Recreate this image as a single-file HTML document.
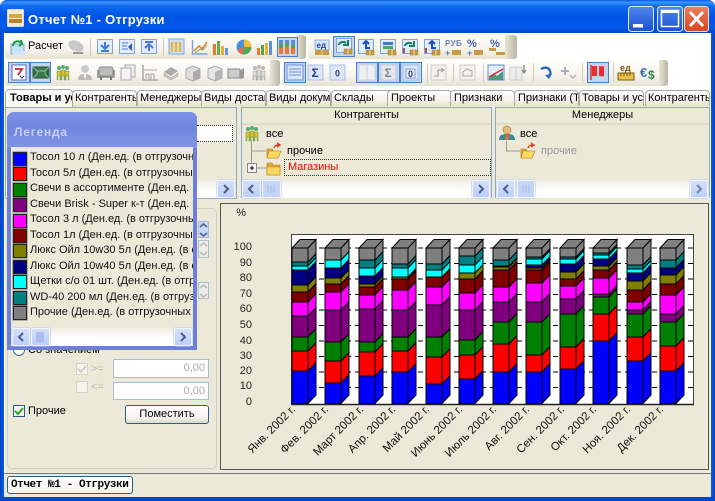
<!DOCTYPE html>
<html><head><meta charset="utf-8"><title>Отчет №1 - Отгрузки</title>
<style>
html,body{margin:0;padding:0;width:715px;height:501px;overflow:hidden;background:#fff}
body{position:relative;font:11px "Liberation Sans","Noto Sans CJK SC",sans-serif;color:#000}
.a,.a *{box-sizing:border-box}
.a{position:absolute;white-space:nowrap;overflow:hidden}
.tb{background:linear-gradient(#fefefc,#f6f4ec 60%,#e6e3d3);border-radius:3px 0 0 3px}
.grip{background:linear-gradient(90deg,#e8e5d8,#b9b5a2);border-radius:0 3px 3px 0}
.pr{background:#c5d3ec;border:1px solid #4a7fd0}
.sep{width:1px;background:#cfccbc}
.tab{top:90px;height:16px;width:65px;background:linear-gradient(#fff,#f1efe6 70%,#e4e1d2);border:1px solid #a9aba0;border-bottom:0;border-radius:4px 4px 0 0;padding:0 0 0 2px;line-height:15px;font-size:11px}
.pan{background:#ece9d8;border:1px solid #8fa8c6}
.hd{background:#ece9d8;border-bottom:2px solid #dfdccb;text-align:center;line-height:15px;height:17px;font-size:11px}
.track{background:linear-gradient(#efede3,#fff 60%,#fff)}
.sb{background:linear-gradient(#d5e0fa,#bccffb);border:1px solid #f2f5fd;border-radius:2px;box-shadow:0 0 0 .5px #b5c6ea}
.sw{left:13px;width:14px;height:14px;border:1px solid #222;box-shadow:0 0 0 .5px #777}
.lt{left:30px;width:163px;height:15px;line-height:15px;font-size:11px;color:#111}
.inp{background:#fff;border:1px solid #a9bdd6;text-align:right;color:#aaa;padding-right:3px;line-height:17px;font-size:11px}
.cb{background:#f4f3ee;border:1px solid #d6d3c6;border-radius:1px}
svg{position:absolute;left:0;top:0;overflow:visible}
.ch path{stroke:#000;stroke-width:1;vector-effect:non-scaling-stroke}
text{font-family:"Liberation Sans",sans-serif}
</style></head><body>

<!-- window frame -->
<div class="a" style="left:0;top:0;width:715px;height:501px;background:#0054e3;border-radius:7px 7px 0 0"></div>
<div class="a" style="left:0;top:0;width:715px;height:33px;border-radius:7px 7px 0 0;background:linear-gradient(#0a5ae0,#3a93ff 7%,#0f6bf0 18%,#0054e3 50%,#0058ea 85%,#0046cc)"></div>
<div class="a" style="left:0;top:33px;width:4px;height:468px;background:linear-gradient(90deg,#0041c0,#0a5ee8)"></div>
<div class="a" style="left:711px;top:33px;width:4px;height:468px;background:linear-gradient(90deg,#0a5ee8,#0041c0)"></div>
<div class="a" style="left:0;top:497px;width:715px;height:4px;background:#0046cc"></div>
<div class="a" style="left:4px;top:33px;width:707px;height:464px;background:#fff"></div>
<div class="a" style="left:28px;top:12px;height:16px;line-height:16px;font-size:13px;font-weight:bold;color:#fff;letter-spacing:.25px">Отчет №1 - Отгрузки</div>

<!-- toolbars -->
<div class="a tb" style="left:5px;top:35px;width:295px;height:24px"></div>
<div class="a grip" style="left:296px;top:35px;width:10px;height:24px"></div>
<div class="a tb" style="left:308px;top:35px;width:200px;height:24px"></div>
<div class="a grip" style="left:505px;top:35px;width:12px;height:24px"></div>
<div class="a tb" style="left:5px;top:60px;width:268px;height:26px"></div>
<div class="a grip" style="left:270px;top:60px;width:10px;height:26px"></div>
<div class="a tb" style="left:282px;top:60px;width:380px;height:26px"></div>
<div class="a grip" style="left:659px;top:60px;width:9px;height:26px"></div>
<div class="a pr" style="left:277px;top:37px;width:21px;height:20px"></div>
<div class="a pr" style="left:333px;top:36px;width:22px;height:21px"></div>
<div class="a pr" style="left:8px;top:62px;width:22px;height:21px"></div>
<div class="a pr" style="left:30px;top:62px;width:21px;height:21px"></div>
<div class="a pr" style="left:284px;top:62px;width:22px;height:21px"></div>
<div class="a pr" style="left:356px;top:62px;width:22px;height:21px"></div>
<div class="a pr" style="left:378px;top:62px;width:22px;height:21px"></div>
<div class="a pr" style="left:400px;top:62px;width:22px;height:21px"></div>
<div class="a pr" style="left:587px;top:62px;width:22px;height:21px"></div>
<div class="a sep" style="left:90px;top:38px;height:18px"></div>
<div class="a sep" style="left:163px;top:38px;height:18px"></div>
<div class="a sep" style="left:427px;top:63px;height:19px"></div>
<div class="a sep" style="left:453px;top:63px;height:19px"></div>
<div class="a sep" style="left:483px;top:63px;height:19px"></div>
<div class="a sep" style="left:533px;top:63px;height:19px"></div>
<div class="a sep" style="left:582px;top:63px;height:19px"></div>
<div class="a sep" style="left:613px;top:63px;height:19px"></div>
<div class="a" style="left:28px;top:39px;height:15px;line-height:15px;font-size:11px">Расчет</div>

<!-- tabs -->
<div class="a" style="left:5px;top:105px;width:705px;height:368px;background:#ece9d8"></div>
<div class="a tab" style="left:72px">Контрагенты</div>
<div class="a tab" style="left:137px">Менеджеры</div>
<div class="a tab" style="left:201px">Виды доставки</div>
<div class="a tab" style="left:266px">Виды документов</div>
<div class="a tab" style="left:331px">Склады</div>
<div class="a tab" style="left:387px;padding-left:3px">Проекты</div>
<div class="a tab" style="left:450px;padding-left:3px">Признаки</div>
<div class="a tab" style="left:514px;padding-left:3px">Признаки (Таблица)</div>
<div class="a tab" style="left:579px">Товары и услуги</div>
<div class="a tab" style="left:645px">Контрагенты</div>
<div class="a tab" style="left:5px;top:89px;height:18px;width:68px;background:linear-gradient(#fff,#f8f7f2);font-weight:bold;padding-left:4px;line-height:17px;z-index:2">Товары и услуги</div>

<!-- left panel behind legend -->
<div class="a pan" style="left:5px;top:107px;width:232px;height:92px"></div>
<div class="a" style="left:197px;top:125px;width:36px;height:17px;background:#fff;border:1px dotted #333;border-left:0"></div>
<div class="a track" style="left:6px;top:180px;width:230px;height:18px"></div>
<div class="a sb" style="left:217px;top:180px;width:18px;height:18px"></div>
<div class="a" style="left:7px;top:208px;width:210px;height:261px;border:1px solid #d3d0bf;border-radius:5px"></div>
<div class="a" style="left:198px;top:221px;width:11px;height:17px;background:#c6d5f8;border:1px solid #a9bdd6"></div>
<div class="a" style="left:198px;top:240px;width:11px;height:18px;background:#eeeee8;border:1px solid #a9bdd6"></div>
<div class="a" style="left:198px;top:282px;width:11px;height:17px;background:#eeeee8;border:1px solid #a9bdd6"></div>

<!-- Контрагенты -->
<div class="a pan" style="left:241px;top:107px;width:251px;height:91px">
  <div class="hd">Контрагенты</div>
</div>
<div class="a" style="left:266px;top:127px;height:14px;line-height:14px">все</div>
<div class="a" style="left:287px;top:144px;height:14px;line-height:14px">прочие</div>
<div class="a" style="left:284px;top:159px;width:207px;height:17px;border:1px dotted #333;color:#f00;padding-left:3px;line-height:15px">Магазины</div>
<div class="a track" style="left:242px;top:180px;width:249px;height:18px"></div>
<div class="a sb" style="left:242px;top:180px;width:19px;height:18px"></div>
<div class="a sb" style="left:262px;top:180px;width:19px;height:18px;background:#c5d5f6"></div>
<div class="a sb" style="left:472px;top:180px;width:18px;height:18px"></div>

<!-- Менеджеры -->
<div class="a pan" style="left:495px;top:107px;width:215px;height:91px">
  <div class="hd">Менеджеры</div>
</div>
<div class="a" style="left:520px;top:127px;height:14px;line-height:14px">все</div>
<div class="a" style="left:541px;top:144px;height:14px;line-height:14px;color:#999">прочие</div>
<div class="a track" style="left:496px;top:180px;width:213px;height:18px"></div>
<div class="a sb" style="left:497px;top:180px;width:18px;height:18px"></div>
<div class="a sb" style="left:517px;top:180px;width:18px;height:18px;background:#c5d5f6"></div>
<div class="a sb" style="left:690px;top:180px;width:18px;height:18px"></div>

<!-- group controls -->
<div class="a" style="left:13px;top:344px;width:12px;height:12px;border:1px solid #3f6a9a;border-radius:50%;background:#fff"></div>
<div class="a" style="left:28px;top:343px;height:14px;line-height:14px">Со значением</div>
<div class="a cb" style="left:76px;top:363px;width:12px;height:12px"></div>
<div class="a" style="left:91px;top:362px;height:14px;line-height:14px;color:#bbb">&gt;=</div>
<div class="a inp" style="left:113px;top:359px;width:96px;height:19px">0,00</div>
<div class="a cb" style="left:76px;top:381px;width:12px;height:12px"></div>
<div class="a" style="left:91px;top:380px;height:14px;line-height:14px;color:#bbb">&lt;=</div>
<div class="a inp" style="left:113px;top:382px;width:96px;height:18px">0,00</div>
<div class="a" style="left:13px;top:405px;width:12px;height:12px;background:#f6f5ef;border:1px solid #2a5a8c"></div>
<div class="a" style="left:28px;top:404px;height:15px;line-height:15px">Прочие</div>
<div class="a" style="left:125px;top:405px;width:84px;height:19px;background:linear-gradient(#fff,#f4f3ec 70%,#dcd8c8);border:1px solid #2d5f8c;border-radius:3px;text-align:center;line-height:17px;font-size:11px">Поместить</div>

<!-- legend window -->
<div class="a" style="left:7px;top:112px;width:190px;height:238px;background:#6f7ed8;border-radius:7px 7px 0 0;z-index:3">
  <div class="a" style="left:0;top:0;width:190px;height:36px;background:linear-gradient(#7c93e6,#7086de 40%,#7e93e4)"></div>
  <div class="a" style="left:7px;top:12px;height:16px;line-height:16px;font-size:12px;font-weight:bold;color:#c6cff5;letter-spacing:.8px">Легенда</div>
  <div class="a" style="left:4px;top:35px;width:182px;height:199px;background:#ece9d8"></div>
  <div class="a track" style="left:4px;top:216px;width:182px;height:18px"></div>
  <div class="a sb" style="left:5px;top:216px;width:18px;height:18px"></div>
  <div class="a sb" style="left:24px;top:216px;width:19px;height:18px"></div>
  <div class="a sb" style="left:167px;top:216px;width:18px;height:18px"></div>
</div>
<div class="a" style="left:0;top:0;width:193px;height:340px;z-index:4;background:transparent">
<div class="a sw" style="top:152px;background:#00f"></div><div class="a lt" style="top:150px">Тосол 10 л (Ден.ед. (в отгрузочных ц</div>
<div class="a sw" style="top:167px;background:#f00"></div><div class="a lt" style="top:166px">Тосол 5л (Ден.ед. (в отгрузочных це</div>
<div class="a sw" style="top:183px;background:#008000"></div><div class="a lt" style="top:181px">Свечи  в ассортименте (Ден.ед. (в от</div>
<div class="a sw" style="top:198px;background:#800080"></div><div class="a lt" style="top:197px">Свечи Brisk - Super  к-т (Ден.ед. (в от</div>
<div class="a sw" style="top:214px;background:#f0f"></div><div class="a lt" style="top:212px">Тосол 3 л (Ден.ед. (в отгрузочных це</div>
<div class="a sw" style="top:229px;background:#800000"></div><div class="a lt" style="top:228px">Тосол 1л (Ден.ед. (в отгрузочных цен</div>
<div class="a sw" style="top:244px;background:#808000"></div><div class="a lt" style="top:243px">Люкс Ойл 10w30 5л (Ден.ед. (в отгр</div>
<div class="a sw" style="top:260px;background:#000080"></div><div class="a lt" style="top:259px">Люкс Ойл 10w40 5л (Ден.ед. (в отгр</div>
<div class="a sw" style="top:275px;background:#0ff"></div><div class="a lt" style="top:274px">Щетки с/о 01 шт. (Ден.ед. (в отгруз</div>
<div class="a sw" style="top:291px;background:#008080"></div><div class="a lt" style="top:290px">WD-40 200 мл (Ден.ед. (в отгрузоч</div>
<div class="a sw" style="top:306px;background:#808080"></div><div class="a lt" style="top:305px">Прочие (Ден.ед. (в отгрузочных цен</div>
</div>

<!-- chart frame -->
<div class="a" style="left:220px;top:203px;width:489px;height:267px;background:#ece9d8;border:1px solid #555"></div>

<!-- status -->
<div class="a" style="left:4px;top:473px;width:707px;height:24px;background:#ece9d8;border-top:1px solid #777"></div>
<div class="a" style="left:7px;top:476px;width:126px;height:18px;background:linear-gradient(#fff,#f3f1e8);border:1px solid #2d5f8c;border-radius:3px;font:bold 11px/16px 'Liberation Mono',monospace;padding-left:3px;letter-spacing:-.42px">Отчет №1 - Отгрузки</div>

<!-- Chart -->
<svg width="715" height="501" class="ch" style="z-index:1">
<defs>
<path id="t" fill="#808080" d="M0 248h16l8-8.5H8z"/>
<g id="b1"><path fill="#00f" d="M0 371h16v32.500H0z"/><path fill="#f00" d="M0 351h16v20H0z"/><path fill="#008000" d="M0 337h16v14H0z"/><path fill="#800080" d="M0 316h16v21H0z"/><path fill="#f0f" d="M0 302h16v14H0z"/><path fill="#800000" d="M0 292h16v10H0z"/><path fill="#808000" d="M0 285h16v7H0z"/><path fill="#000080" d="M0 270h16v15H0z"/><path fill="#0ff" d="M0 266h16v4H0z"/><path fill="#008080" d="M0 262h16v4H0z"/><path fill="#808080" d="M0 248h16v14H0z"/></g>
<g id="b2"><path fill="#00f" d="M0 383h16v20.500H0z"/><path fill="#f00" d="M0 361h16v22H0z"/><path fill="#008000" d="M0 342h16v19H0z"/><path fill="#800080" d="M0 310h16v32H0z"/><path fill="#f0f" d="M0 292h16v18H0z"/><path fill="#800000" d="M0 284h16v8H0z"/><path fill="#808000" d="M0 278h16v6H0z"/><path fill="#000080" d="M0 268h16v10H0z"/><path fill="#0ff" d="M0 260h16v8H0z"/><path fill="#808080" d="M0 248h16v12H0z"/></g>
<g id="b3"><path fill="#00f" d="M0 376h16v27.500H0z"/><path fill="#f00" d="M0 352h16v24H0z"/><path fill="#008000" d="M0 342h16v10H0z"/><path fill="#800080" d="M0 309h16v33H0z"/><path fill="#f0f" d="M0 295h16v14H0z"/><path fill="#800000" d="M0 287h16v8H0z"/><path fill="#808000" d="M0 284h16v3H0z"/><path fill="#000080" d="M0 276h16v8H0z"/><path fill="#0ff" d="M0 268h16v8H0z"/><path fill="#008080" d="M0 260h16v8H0z"/><path fill="#808080" d="M0 248h16v12H0z"/></g>
<g id="b4"><path fill="#00f" d="M0 372h16v31.500H0z"/><path fill="#f00" d="M0 351h16v21H0z"/><path fill="#008000" d="M0 337h16v14H0z"/><path fill="#800080" d="M0 310h16v27H0z"/><path fill="#f0f" d="M0 290h16v20H0z"/><path fill="#800000" d="M0 279h16v11H0z"/><path fill="#808000" d="M0 277h16v2H0z"/><path fill="#0ff" d="M0 268h16v9H0z"/><path fill="#008080" d="M0 264h16v4H0z"/><path fill="#808080" d="M0 248h16v16H0z"/></g>
<g id="b5"><path fill="#00f" d="M0 384h16v19.500H0z"/><path fill="#f00" d="M0 357h16v27H0z"/><path fill="#008000" d="M0 337h16v20H0z"/><path fill="#800080" d="M0 305h16v32H0z"/><path fill="#f0f" d="M0 287h16v18H0z"/><path fill="#800000" d="M0 277h16v10H0z"/><path fill="#0ff" d="M0 270h16v7H0z"/><path fill="#008080" d="M0 264h16v6H0z"/><path fill="#808080" d="M0 248h16v16H0z"/></g>
<g id="b6"><path fill="#00f" d="M0 379h16v24.500H0z"/><path fill="#f00" d="M0 355h16v24H0z"/><path fill="#008000" d="M0 340h16v15H0z"/><path fill="#800080" d="M0 310h16v30H0z"/><path fill="#f0f" d="M0 293h16v17H0z"/><path fill="#800000" d="M0 279h16v14H0z"/><path fill="#808000" d="M0 273h16v6H0z"/><path fill="#0ff" d="M0 265h16v8H0z"/><path fill="#008080" d="M0 256h16v9H0z"/><path fill="#808080" d="M0 248h16v8H0z"/></g>
<g id="b7"><path fill="#00f" d="M0 372h16v31.500H0z"/><path fill="#f00" d="M0 344h16v28H0z"/><path fill="#008000" d="M0 322h16v22H0z"/><path fill="#800080" d="M0 302h16v20H0z"/><path fill="#f0f" d="M0 287h16v15H0z"/><path fill="#800000" d="M0 270h16v17H0z"/><path fill="#808000" d="M0 267h16v3H0z"/><path fill="#0ff" d="M0 266h16v1H0z"/><path fill="#008080" d="M0 260h16v6H0z"/><path fill="#808080" d="M0 248h16v12H0z"/></g>
<g id="b8"><path fill="#00f" d="M0 372h16v31.500H0z"/><path fill="#f00" d="M0 355h16v17H0z"/><path fill="#008000" d="M0 322h16v33H0z"/><path fill="#800080" d="M0 302h16v20H0z"/><path fill="#f0f" d="M0 283h16v19H0z"/><path fill="#800000" d="M0 270h16v13H0z"/><path fill="#808000" d="M0 268h16v2H0z"/><path fill="#000080" d="M0 265h16v3H0z"/><path fill="#0ff" d="M0 259h16v6H0z"/><path fill="#008080" d="M0 257h16v2H0z"/><path fill="#808080" d="M0 248h16v9H0z"/></g>
<g id="b9"><path fill="#00f" d="M0 369h16v34.500H0z"/><path fill="#f00" d="M0 347h16v22H0z"/><path fill="#008000" d="M0 314h16v33H0z"/><path fill="#800080" d="M0 299h16v15H0z"/><path fill="#f0f" d="M0 286h16v13H0z"/><path fill="#800000" d="M0 279h16v7H0z"/><path fill="#808000" d="M0 272h16v7H0z"/><path fill="#000080" d="M0 264h16v8H0z"/><path fill="#0ff" d="M0 259h16v5H0z"/><path fill="#008080" d="M0 257h16v2H0z"/><path fill="#808080" d="M0 248h16v9H0z"/></g>
<g id="b10"><path fill="#00f" d="M0 341h16v62.500H0z"/><path fill="#f00" d="M0 314h16v27H0z"/><path fill="#008000" d="M0 297h16v17H0z"/><path fill="#800080" d="M0 294h16v3H0z"/><path fill="#f0f" d="M0 278h16v16H0z"/><path fill="#800000" d="M0 270h16v8H0z"/><path fill="#808000" d="M0 266h16v4H0z"/><path fill="#000080" d="M0 259h16v7H0z"/><path fill="#0ff" d="M0 255h16v4H0z"/><path fill="#008080" d="M0 253h16v2H0z"/><path fill="#808080" d="M0 248h16v5H0z"/></g>
<g id="b11"><path fill="#00f" d="M0 361h16v42.500H0z"/><path fill="#f00" d="M0 337h16v24H0z"/><path fill="#008000" d="M0 314h16v23H0z"/><path fill="#800080" d="M0 310h16v4H0z"/><path fill="#f0f" d="M0 302h16v8H0z"/><path fill="#800000" d="M0 290h16v12H0z"/><path fill="#808000" d="M0 281h16v9H0z"/><path fill="#000080" d="M0 273h16v8H0z"/><path fill="#0ff" d="M0 269h16v4H0z"/><path fill="#008080" d="M0 265h16v4H0z"/><path fill="#808080" d="M0 248h16v17H0z"/></g>
<g id="b12"><path fill="#00f" d="M0 371h16v32.500H0z"/><path fill="#f00" d="M0 346h16v25H0z"/><path fill="#008000" d="M0 322h16v24H0z"/><path fill="#800080" d="M0 314h16v8H0z"/><path fill="#f0f" d="M0 295h16v19H0z"/><path fill="#800000" d="M0 284h16v11H0z"/><path fill="#808000" d="M0 275h16v9H0z"/><path fill="#000080" d="M0 268h16v7H0z"/><path fill="#008080" d="M0 260h16v8H0z"/><path fill="#808080" d="M0 248h16v12H0z"/></g>
</defs>
<rect x="291.500" y="234.500" width="402" height="170" fill="#fff"/>
<g stroke="#000" stroke-dasharray="5 4" style="stroke-width:1"><path d="M292 248H693M292 263.500H693M292 279H693M292 294.500H693M292 310H693M292 325.500H693M292 341H693M292 356.500H693M292 372H693M292 387.500H693"/></g>
<rect x="291.500" y="234.500" width="402" height="170" fill="none" stroke="#444"/>
<path d="M291 404.500H694" style="stroke:#222;stroke-width:1.500"/>
<use href="#b1" transform="matrix(.5 -.53 0 1 308 0)"/><use href="#t" x="292"/><use href="#b1" x="292"/>
<use href="#b2" transform="matrix(.5 -.53 0 1 341 0)"/><use href="#t" x="325"/><use href="#b2" x="325"/>
<use href="#b3" transform="matrix(.5 -.53 0 1 375 0)"/><use href="#t" x="359"/><use href="#b3" x="359"/>
<use href="#b4" transform="matrix(.5 -.53 0 1 408 0)"/><use href="#t" x="392"/><use href="#b4" x="392"/>
<use href="#b5" transform="matrix(.5 -.53 0 1 442 0)"/><use href="#t" x="426"/><use href="#b5" x="426"/>
<use href="#b6" transform="matrix(.5 -.53 0 1 475 0)"/><use href="#t" x="459"/><use href="#b6" x="459"/>
<use href="#b7" transform="matrix(.5 -.53 0 1 509 0)"/><use href="#t" x="493"/><use href="#b7" x="493"/>
<use href="#b8" transform="matrix(.5 -.53 0 1 542 0)"/><use href="#t" x="526"/><use href="#b8" x="526"/>
<use href="#b9" transform="matrix(.5 -.53 0 1 576 0)"/><use href="#t" x="560"/><use href="#b9" x="560"/>
<use href="#b10" transform="matrix(.5 -.53 0 1 609 0)"/><use href="#t" x="593"/><use href="#b10" x="593"/>
<use href="#b11" transform="matrix(.5 -.53 0 1 643 0)"/><use href="#t" x="627"/><use href="#b11" x="627"/>
<use href="#b12" transform="matrix(.5 -.53 0 1 676 0)"/><use href="#t" x="660"/><use href="#b12" x="660"/>
<g font-size="11" fill="#222" text-anchor="end">
<text x="252" y="250">100</text><text x="252" y="266">90</text><text x="252" y="281">80</text><text x="252" y="297">70</text><text x="252" y="312">60</text><text x="252" y="328">50</text><text x="252" y="344">40</text><text x="252" y="359">30</text><text x="252" y="374">20</text><text x="252" y="389">10</text><text x="252" y="405">0</text>
<text x="246" y="216">%</text>
</g>
<g font-size="11.500" fill="#111" text-anchor="end">
<text transform="translate(296,410) rotate(-45)">Янв. 2002 г.</text>
<text transform="translate(329,410) rotate(-45)">Фев. 2002 г.</text>
<text transform="translate(364,410) rotate(-45)">Март 2002 г.</text>
<text transform="translate(396,410) rotate(-45)">Апр. 2002 г.</text>
<text transform="translate(430,410) rotate(-45)">Май 2002 г.</text>
<text transform="translate(463,410) rotate(-45)">Июнь 2002 г.</text>
<text transform="translate(497,410) rotate(-45)">Июль 2002 г.</text>
<text transform="translate(530,410) rotate(-45)">Авг. 2002 г.</text>
<text transform="translate(565,410) rotate(-45)">Сен. 2002 г.</text>
<text transform="translate(597,410) rotate(-45)">Окт. 2002 г.</text>
<text transform="translate(631,410) rotate(-45)">Ноя. 2002 г.</text>
<text transform="translate(664,410) rotate(-45)">Дек. 2002 г.</text>
</g>
</svg>

<!-- Icons -->
<svg width="715" height="501" style="z-index:5">
<defs>
<linearGradient id="cb" x1="0" y1="0" x2="0" y2="1"><stop offset="0" stop-color="#4f86f0"/><stop offset="1" stop-color="#1c50d0"/></linearGradient>
<linearGradient id="cr" x1="0" y1="0" x2="0" y2="1"><stop offset="0" stop-color="#e9805f"/><stop offset="1" stop-color="#d8431c"/></linearGradient>
<g id="fr"><rect x=".5" y=".5" width="15" height="14" fill="#e3ecfb" stroke="#7fa4e0"/></g>
<g id="bx"><rect x="8" y="11" width="8" height="5" fill="#c79a45" stroke="#a67a2c" stroke-width=".5"/><path d="M12 11v5" stroke="#f0d898"/></g>
<g id="pp"><circle cx="4" cy="4" r="2" fill="#5caa70"/><circle cx="8" cy="3" r="2" fill="#5caa70"/><circle cx="12" cy="4" r="2" fill="#5caa70"/><path d="M2 7h4v9H5v-4H3v4H2zM6 6h4v10H9v-4H7v4H6zM10 7h4v9h-1v-4h-2v4h-1z" fill="#e0bf2a" stroke="#3a8a50" stroke-width=".4"/></g>
<g id="gp"><circle cx="4" cy="4" r="2" fill="#bbb"/><circle cx="8" cy="3" r="2" fill="#bbb"/><circle cx="12" cy="4" r="2" fill="#bbb"/><path d="M2 7h4v9H5v-4H3v4H2zM6 6h4v10H9v-4H7v4H6zM10 7h4v9h-1v-4h-2v4h-1z" fill="#ddd" stroke="#888" stroke-width=".4"/></g>
<g id="of"><path d="M1 6h5l1 2h5v7H1z" fill="#e8a82c" stroke="#a87414" stroke-width=".6"/><path d="M3 8h12l-3 7H1z" fill="#fbd860" stroke="#b58020" stroke-width=".6"/><path d="M8 5c1-3 3-3 5-3M11 0l3 2-3 2" fill="none" stroke="#d8401c" stroke-width="1.400"/></g>
<g id="cf"><path d="M1 3h5l1 2h7v10H1z" fill="#e8a82c" stroke="#a87414" stroke-width=".6"/><path d="M1 7h13v8H1z" fill="#fbd860" stroke="#b58020" stroke-width=".6"/></g>
<path id="la" d="M11 4l-4 4 4 4" fill="none" stroke="#4d6185" stroke-width="2"/>
<path id="ra" d="M7 4l4 4-4 4" fill="none" stroke="#4d6185" stroke-width="2"/>
</defs>
<!-- caption -->
<rect x="628.500" y="6.500" width="25" height="25" rx="3" fill="url(#cb)" stroke="#dfe9fb"/><rect x="633" y="24" width="10" height="3.500" fill="#fff"/>
<rect x="657.500" y="6.500" width="25" height="25" rx="3" fill="url(#cb)" stroke="#dfe9fb"/><rect x="661.500" y="10.500" width="17" height="16" fill="none" stroke="#fff" stroke-width="1.500"/><rect x="661" y="10" width="18" height="3" fill="#fff"/>
<rect x="684.500" y="6.500" width="24" height="25" rx="3" fill="url(#cr)" stroke="#f0dcd4"/><path d="M690 12l13 14M703 12l-13 14" stroke="#fff" stroke-width="2.800"/>
<!-- title icon -->
<rect x="7.500" y="9.500" width="16" height="17" rx="1" fill="#f4eccf" stroke="#cfdcf5"/><rect x="9" y="14" width="13" height="4" fill="#d8a647"/><rect x="9" y="19" width="13" height="4" fill="#b9842f"/>

<!-- row 1 -->
<g transform="translate(10,39)"><rect x="1" y="5" width="13" height="10" fill="#bfe2f5" stroke="#7aa7d0"/><rect x="3" y="12" width="12" height="4" fill="#cfe8fa"/><path d="M3 7c0-5 6-6 8-3M9 7l3-2-1-4" fill="none" stroke="#1e9a46" stroke-width="2"/></g>
<g transform="translate(68,39)"><ellipse cx="8" cy="7" rx="8" ry="5" fill="#c8c8c8" transform="rotate(25 8 7)"/><path d="M5 13h10v2H5z" fill="#999"/></g>
<g transform="translate(97,39)"><use href="#fr"/><path d="M8 3v6M4 6l4 4 4-4M4 12h8" fill="none" stroke="#4a78d8" stroke-width="2"/></g>
<g transform="translate(119,39)"><use href="#fr"/><path d="M3 4h6M3 7h5M3 10h6" stroke="#4a78d8"/><path d="M13 4l-4 4 4 4z" fill="#2a58c8"/></g>
<g transform="translate(141,39)"><use href="#fr"/><path d="M8 12V6M4 9l4-4 4 4M4 3h8" fill="none" stroke="#4a78d8" stroke-width="2"/></g>
<g transform="translate(169,39)"><rect width="15" height="15" fill="#cfdff8" stroke="#7fa4e0"/><path d="M3 3v10M7 3v10M11 3v10" stroke="#e6b83a" stroke-width="2.400"/></g>
<g transform="translate(192,39)"><path d="M.5 1v14h15" fill="none" stroke="#7fa4e0" stroke-width="1.500"/><path d="M2 12l5-5 3 3 5-7" fill="none" stroke="#e87a30" stroke-width="1.500"/><path d="M3 14l5-4 3 1 4-5" fill="none" stroke="#7ab04a"/></g>
<g transform="translate(213,41)"><rect x="0" y="3" width="3" height="11" fill="#e87a30"/><rect x="4" y="0" width="3" height="14" fill="#68a850"/><rect x="8" y="5" width="3" height="9" fill="#e8b030"/><rect x="12" y="7" width="3" height="7" fill="#6a98e0"/></g>
<g transform="translate(236,39)"><circle cx="8" cy="8" r="7.500" fill="#4a90d8"/><path d="M8 8V.5A7.500 7.500 0 0 1 15.500 8z" fill="#f0c030"/><path d="M8 8h7.500A7.500 7.500 0 0 1 6 15z" fill="#50a850"/><path d="M8 8L6 15A7.500 7.500 0 0 1 1 11z" fill="#e86a4a"/></g>
<g transform="translate(257,40)"><rect x="0" y="8" width="3" height="7" fill="#e87a30"/><rect x="4" y="5" width="3" height="10" fill="#5aa050"/><rect x="8" y="3" width="3" height="12" fill="#e8b030"/><rect x="12" y="1" width="3" height="14" fill="#5a90d8"/></g>
<g transform="translate(279,40)"><g fill="#e87a30"><rect x="0" y="8" width="4" height="6"/><rect x="6" y="7" width="4" height="7"/><rect x="12" y="8" width="4" height="6"/></g><g fill="#5aa050"><rect x="0" y="4" width="4" height="4"/><rect x="6" y="3" width="4" height="4"/><rect x="12" y="5" width="4" height="3"/></g><g fill="#5a90d8"><rect x="0" y="0" width="4" height="4"/><rect x="6" y="0" width="4" height="3"/><rect x="12" y="0" width="4" height="5"/></g></g>

<g transform="translate(314,39)"><rect x="1" y="1" width="14" height="10" fill="#d8e6fa" stroke="#8fb0e0"/><text x="2.500" y="9" font-size="8" font-weight="bold" fill="#24408a">ед</text><rect x="1" y="11" width="14" height="5" fill="#c79a45"/><path d="M8 11v5" stroke="#f0d898"/></g>
<g transform="translate(336,38)"><use href="#fr"/><path d="M3 7c0-3 5-4 7-2M12 2v5H7" fill="none" stroke="#148060" stroke-width="2"/><use href="#bx"/></g>
<g transform="translate(358,39)"><use href="#fr"/><path d="M5 5l3-3 3 3M8 3v6h4" fill="none" stroke="#1a50c0" stroke-width="2"/><use href="#bx"/></g>
<g transform="translate(380,39)"><use href="#fr"/><rect x="3" y="3" width="10" height="3" fill="#3a78d8"/><rect x="3" y="7" width="10" height="3" fill="#4aa860"/><use href="#bx"/></g>
<g transform="translate(402,39)"><use href="#fr"/><path d="M3 7c0-3 5-4 7-2M12 2v5H7" fill="none" stroke="#148060" stroke-width="2"/><path d="M2 9v5" stroke="#8a2020" stroke-width="1.500"/><use href="#bx"/></g>
<g transform="translate(424,39)"><use href="#fr"/><path d="M5 5l3-3 3 3M8 3v6h4" fill="none" stroke="#1a50c0" stroke-width="2"/><path d="M2 9v5" stroke="#8a2020" stroke-width="1.500"/><use href="#bx"/></g>
<text x="445" y="46" font-size="8" font-weight="bold" fill="#6a80b8" letter-spacing=".4">РУБ</text><text x="445" y="56" font-size="9" font-weight="bold" fill="#6a80b8">+</text><rect x="452" y="50" width="9" height="5" fill="#c79a45"/>
<text x="467" y="47" font-size="11" font-weight="bold" fill="#4860a8">%</text><text x="467" y="56" font-size="9" font-weight="bold" fill="#6a80b8">+</text><rect x="474" y="50" width="9" height="5" fill="#c79a45"/>
<text x="490" y="47" font-size="11" font-weight="bold" fill="#4860a8">%</text><rect x="489" y="48" width="7" height="3" fill="#c79a45"/><rect x="496" y="52" width="9" height="3" fill="#c79a45"/>

<!-- row 2 -->
<g transform="translate(11,64)"><rect x="1" y="1" width="14" height="15" fill="#fff" stroke="#5a68c0"/><path d="M4 5h7l-4 6" fill="none" stroke="#d8203a" stroke-width="1.800"/><path d="M9 12l2 2 2-2" fill="none" stroke="#2040a0"/></g>
<g transform="translate(33,65)"><rect x="0" y="2" width="16" height="11" fill="#3c7a4e" stroke="#24503a"/><path d="M0 2l4 4v3l-4 4M16 2l-4 4v3l4 4M4 6h8" stroke="#8fbf9a" fill="#2e6440"/></g>
<use href="#pp" transform="translate(55,64)"/>
<g transform="translate(77,64)"><circle cx="8" cy="5" r="4" fill="#ccc"/><path d="M1 16c0-5 3-6 7-6s7 1 7 6z" fill="#bbb"/><path d="M7 10h2v4H7z" fill="#eee"/></g>
<g transform="translate(98,65)"><rect x="1" y="2" width="14" height="9" rx="2" fill="#bbb" stroke="#888"/><path d="M0 5v7h16V5" fill="none" stroke="#888" stroke-width="1.500"/><path d="M3 12v3M13 12v3" stroke="#777" stroke-width="2"/></g>
<g transform="translate(120,64)"><rect x="5" y="1" width="10" height="12" fill="#eee" stroke="#aaa"/><rect x="1" y="4" width="10" height="12" fill="#f4f4f4" stroke="#aaa"/></g>
<g transform="translate(142,64)"><path d="M1 1v15h15" fill="none" stroke="#aaa" stroke-width="1.500"/><path d="M1 6h14" stroke="#aaa"/><path d="M4 10h3v6H4zM9 10h3v6H9z" fill="#eee" stroke="#aaa"/></g>
<g transform="translate(163,65)"><path d="M1 7l7-5 7 4-7 5z" fill="#aaa"/><path d="M1 8l7 5 7-5v3l-7 4-7-4z" fill="#c8c8c8" stroke="#999" stroke-width=".5"/></g>
<g transform="translate(185,65)"><path d="M1 4l7-3 7 3v9l-7 3-7-3z" fill="#ddd" stroke="#aaa"/><path d="M8 7v9l7-3V4z" fill="#aaa"/></g>
<g transform="translate(207,65)"><path d="M1 4l7-3 7 3v9l-7 3-7-3z" fill="#e6e6e6" stroke="#aaa"/><path d="M8 7v9l7-3V4z" fill="#b5b5b5"/></g>
<g transform="translate(228,66)"><rect x="0" y="3" width="12" height="9" fill="#ccc" stroke="#888"/><path d="M12 5l4-3v10l-4 1z" fill="#999"/></g>
<use href="#gp" transform="translate(251,64)"/>

<g transform="translate(287,64)"><rect x="0" y="1" width="16" height="15" fill="#dbe6fa" stroke="#6d8fd8"/><path d="M2 5h12M2 8h12M2 11h12" stroke="#8fb0e0" stroke-width="1.500"/></g>
<g transform="translate(308,65)"><rect x="0" y="0" width="15" height="15" fill="#dce7fb" stroke="#a8c2ec"/><text x="3.500" y="12" font-size="12" font-weight="bold" fill="#2c3a90">Σ</text></g>
<g transform="translate(330,65)"><rect x="0" y="0" width="15" height="15" fill="#dce7fb" stroke="#a8c2ec"/><rect x="4" y="4" width="8" height="8" fill="#e4ecfa"/><text x="5" y="11.500" font-size="9" font-weight="bold" fill="#2c3a90">0</text></g>
<g transform="translate(359,65)"><rect x="0" y="0" width="16" height="15" fill="#eef0f2" stroke="#d0d4dc"/><path d="M8 0v15" stroke="#d0d4dc"/></g>
<g transform="translate(381,65)"><rect x="0" y="0" width="15" height="15" fill="#e3e6ec" stroke="#c5cad4"/><text x="3.500" y="12" font-size="12" font-weight="bold" fill="#888">Σ</text></g>
<g transform="translate(403,65)"><rect x="0" y="0" width="15" height="15" fill="#dce7fb" stroke="#a8c2ec"/><rect x="3" y="4" width="9" height="9" fill="#eef2fb" stroke="#8a96c0"/><text x="5" y="12" font-size="9" font-weight="bold" fill="#2c3a90">0</text></g>
<g transform="translate(431,65)"><rect x="0" y="0" width="15" height="15" fill="#f2f1ea" stroke="#ccc"/><path d="M3 11h4V5h5M10 3l3 2-3 2" fill="none" stroke="#999"/></g>
<g transform="translate(460,65)"><rect x="0" y="0" width="15" height="15" fill="#f2f1ea" stroke="#ccc"/><path d="M3 11v-4l4-3 5 2v5z" fill="none" stroke="#aaa"/></g>
<g transform="translate(488,64)"><rect x="0" y="1" width="16" height="15" fill="#e4ecfb" stroke="#6a8ad0"/><path d="M1 14l5-5 3 3 6-5v9H1z" fill="#4a9a80"/><path d="M1 13L15 5" stroke="#d83020" stroke-width="1.500"/></g>
<g transform="translate(510,65)"><rect x="0" y="2" width="12" height="13" fill="#eee" stroke="#ccc"/><path d="M6 2v13" stroke="#ccc"/><path d="M14 0v7M12 5l2 3 2-3" fill="none" stroke="#888" stroke-width="1.300"/></g>
<g transform="translate(540,66)"><path d="M1 3c3-2 8-2 9 2 1 2 0 4-1 5" fill="none" stroke="#2a64c8" stroke-width="2.400"/><path d="M5 9l4 4 3-5z" fill="#2a64c8"/></g>
<g transform="translate(561,66)"><path d="M4 1v8M0 5h8" stroke="#a8b2c0" stroke-width="2"/><path d="M9 9l3 3 3-3" fill="none" stroke="#a8b2c0" stroke-width="1.400"/></g>
<g transform="translate(590,64)"><path d="M1 1v15" stroke="#c04040" stroke-width="1.500"/><path d="M2 2h5v10H2zM9 2c2 0 4 1 5 0v10c-2 1-3 0-5 0z" fill="#f02a30"/></g>
<g transform="translate(618,63)"><text x="2" y="8" font-size="9" font-weight="bold" fill="#7a5810">ед</text><path d="M0 10h16v7H0z" fill="#e8c24a" stroke="#7a5810"/><path d="M3 10v3M6 10v3M9 10v3M12 10v3" stroke="#7a5810"/></g>
<text x="640" y="77" font-size="13" font-weight="bold" fill="#3a70c0">€</text><text x="648" y="79" font-size="12" font-weight="bold" fill="#2a8a48">$</text>

<!-- tree -->
<use href="#pp" transform="translate(244,125)"/>
<path d="M251.500 141v22M251.500 151H266M256 168h10" stroke="#9c9a88" fill="none"/>
<use href="#of" transform="translate(266,143)"/>
<rect x="247.500" y="163.500" width="9" height="9" fill="#f4f3ee" stroke="#888"/><path d="M250 168h4M252 166v4" stroke="#000"/>
<use href="#cf" transform="translate(266,160)"/>
<g transform="translate(499,125)"><circle cx="8" cy="5" r="4" fill="#e8b878" stroke="#806020" stroke-width=".5"/><path d="M0 15c0-5 3-6 8-6s8 1 8 6z" fill="#3a8a98"/><path d="M7 9h2l1 5-2 1-2-1z" fill="#e87020"/></g>
<path d="M506.500 141v10H520" stroke="#9c9a88" fill="none"/>
<use href="#of" transform="translate(520,143)"/>
<!-- scroll arrows -->
<use href="#ra" transform="translate(217,181)"/>
<use href="#la" transform="translate(242,181)"/><use href="#ra" transform="translate(472,181)"/>
<path d="M268 185v8M271 185v8M274 185v8" stroke="#a9bdea"/>
<use href="#la" transform="translate(497,181)"/><use href="#ra" transform="translate(690,181)" opacity=".7"/>
<path d="M523 185v8M526 185v8M529 185v8" stroke="#a9bdea"/>
<!-- spin arrows -->
<path d="M200 227l3.500-3 3.500 3M200 233l3.500 3 3.500-3" fill="none" stroke="#4d6185" stroke-width="1.500"/>
<path d="M200 246l3.500-3 3.500 3M200 252l3.500 3 3.500-3" fill="none" stroke="#bbb" stroke-width="1.500"/>
<path d="M200 288l3.500-3 3.500 3M200 294l3.500 3 3.500-3" fill="none" stroke="#bbb" stroke-width="1.500"/>
<!-- checks -->
<path d="M78 369l3 3 5-6" fill="none" stroke="#ccc" stroke-width="1.800"/>
<path d="M15 411l3 3 5-6" fill="none" stroke="#2aa82a" stroke-width="2"/>
</svg>
<!-- legend scroll icons above -->
<svg width="715" height="501" style="z-index:6">
<use href="#la" transform="translate(12,329)"/><use href="#ra" transform="translate(174,329)"/>
<path d="M37 332v10M39 332v10M41 332v10M43 332v10" stroke="#8ea6dc"/>
</svg>
</body></html>
